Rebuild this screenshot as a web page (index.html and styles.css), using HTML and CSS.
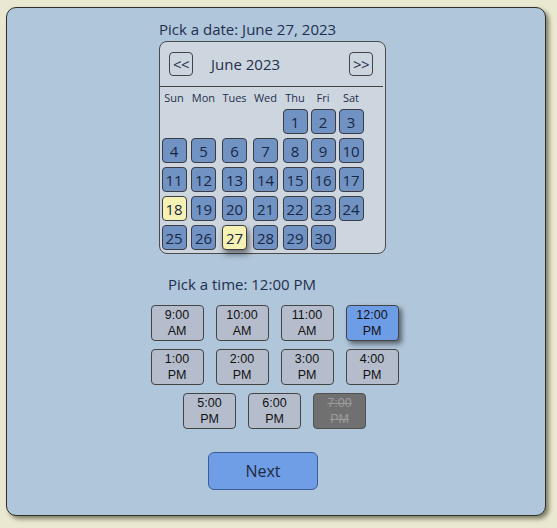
FILE: index.html
```html
<!DOCTYPE html>
<html>
<head>
<meta charset="utf-8">
<link rel="stylesheet" href="styles.css">
</head>
<body>
<div class="card">
  <div class="date-section">
    <div class="label">Pick a date: June 27, 2023</div>
    <div class="calendar">
      <div class="cal-head">
        <button class="nav prev">&lt;&lt;</button>
        <span class="month">June 2023</span>
        <button class="nav next-month">&gt;&gt;</button>
      </div>
      <div class="divider"></div>
      <div class="days">
        <span class="dow">Sun</span><span class="dow">Mon</span><span class="dow">Tues</span><span class="dow">Wed</span><span class="dow">Thu</span><span class="dow">Fri</span><span class="dow">Sat</span>
        <span class="blank"></span><span class="blank"></span><span class="blank"></span><span class="blank"></span>
        <button class="day">1</button><button class="day">2</button><button class="day">3</button>
        <button class="day">4</button><button class="day">5</button><button class="day">6</button><button class="day">7</button><button class="day">8</button><button class="day">9</button><button class="day">10</button>
        <button class="day">11</button><button class="day">12</button><button class="day">13</button><button class="day">14</button><button class="day">15</button><button class="day">16</button><button class="day">17</button>
        <button class="day today">18</button><button class="day">19</button><button class="day">20</button><button class="day">21</button><button class="day">22</button><button class="day">23</button><button class="day">24</button>
        <button class="day">25</button><button class="day">26</button><button class="day today selected">27</button><button class="day">28</button><button class="day">29</button><button class="day">30</button>
      </div>
    </div>
  </div>
  <div class="label time-label">Pick a time: 12:00 PM</div>
  <div class="times">
    <button class="slot">9:00<br>AM</button>
    <button class="slot">10:00<br>AM</button>
    <button class="slot">11:00<br>AM</button>
    <button class="slot active">12:00<br>PM</button>
    <button class="slot">1:00<br>PM</button>
    <button class="slot">2:00<br>PM</button>
    <button class="slot">3:00<br>PM</button>
    <button class="slot">4:00<br>PM</button>
    <button class="slot">5:00<br>PM</button>
    <button class="slot">6:00<br>PM</button>
    <button class="slot disabled" disabled>7:00<br>PM</button>
  </div>
  <button class="next-btn">Next</button>
</div>
</body>
</html>
```

FILE: styles.css
```css
* { box-sizing: border-box; }
html, body { margin: 0; padding: 0; }
body {
  background: #ebe8d2;
  font-family: "Open Sans", sans-serif;
  width: 557px;
  height: 528px;
  overflow: hidden;
}
button { font-family: inherit; padding: 0; margin: 0; cursor: pointer; }
.card {
  margin: 7px 0 0 6px;
  width: 540px;
  height: 509px;
  border: 1px solid #2e2e2e;
  border-radius: 10px;
  background: #b0c6da;
  box-shadow: 3px 3px 4px rgba(70, 70, 40, 0.65);
  padding-top: 11px;
  display: flex;
  flex-direction: column;
  align-items: flex-start;
}
.label {
  font-size: 15px;
  line-height: 20px;
  color: #1f2f4f;
}
.date-section { margin-left: 152px; width: 227px; }
.calendar {
  margin-top: 2px;
  width: 227px;
  height: 213px;
  border: 1px solid #4a4a4a;
  border-radius: 8px;
  background: #cdd5de;
}
.cal-head {
  height: 44px;
  display: flex;
  align-items: center;
}
.nav {
  width: 24px;
  height: 24px;
  border: 1px solid #444;
  border-radius: 4px;
  background: #cdd5de;
  color: #1f2f4f;
  font-size: 15px;
  line-height: 20px;
  letter-spacing: -0.5px;
}
.prev { margin-left: 9px; }
.month {
  margin-left: 18px;
  font-size: 15px;
  color: #1f2f4f;
}
.next-month { margin-left: auto; margin-right: 12px; }
.divider {
  height: 1px;
  background: #444;
  margin-right: 2px;
}
.days {
  display: grid;
  grid-template-columns: 28px 31px 31px 31px 28px 28px 28px;
  grid-template-rows: 18px repeat(5, 25px);
  row-gap: 4px;
  justify-items: center;
}
.days .dow {
  font-size: 11px;
  line-height: 22px;
  height: 18px;
  color: #1f2f4f;
}
.day {
  width: 25px;
  height: 25px;
  border: 1px solid #3c3c44;
  border-radius: 4px;
  background: #7093c3;
  color: #1a2745;
  font-size: 15px;
  line-height: 22px;
}
.day.today { background: #f6f2b4; }
.day.selected { box-shadow: 2px 4px 6px rgba(0, 0, 0, 0.5); }
.time-label { margin-left: 161px; margin-top: 20px; }
.times {
  margin-left: 143px;
  margin-top: 11px;
  width: 249px;
  display: flex;
  flex-wrap: wrap;
  justify-content: center;
  column-gap: 12px;
  row-gap: 8px;
}
.slot {
  width: 53px;
  height: 36px;
  border: 1px solid #444;
  border-radius: 4px;
  background: #b5bdcd;
  color: #111;
  font-family: "Liberation Sans", Arial, sans-serif;
  font-size: 12.5px;
  line-height: 16px;
}
.slot.active {
  background: #6e9de8;
  box-shadow: 3px 3px 5px rgba(0, 0, 0, 0.5);
}
.slot.disabled {
  background: #707070;
  color: #9c9c9c;
  text-decoration: line-through;
  border-color: #505050;
}
.next-btn {
  margin-left: 201px;
  margin-top: 23px;
  width: 110px;
  height: 38px;
  border: 1px solid #3d5a99;
  border-radius: 6px;
  background: #6f9de6;
  color: #1e2a40;
  font-size: 16px;
}
```
